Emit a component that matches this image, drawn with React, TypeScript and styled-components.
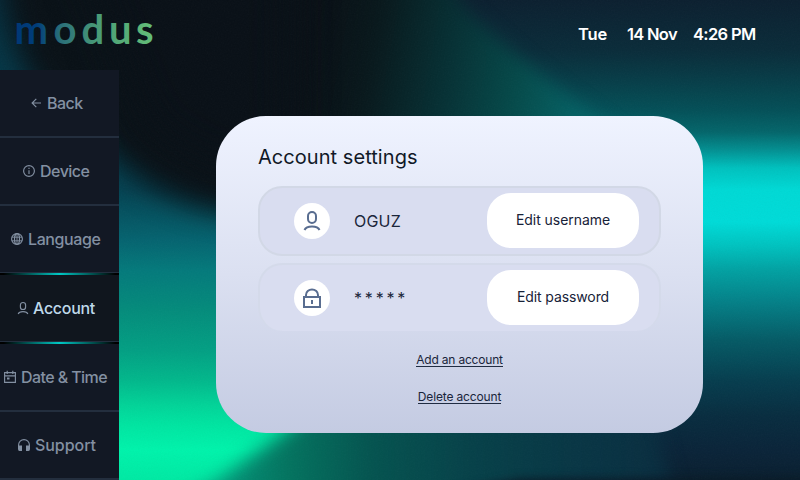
import React from "react";
import styled, { createGlobalStyle } from "styled-components";

const Global = createGlobalStyle`
  *, *::before, *::after { box-sizing: border-box; }
  body { margin: 0; overflow: hidden; background: #0a1119; font-family: Inter, "Open Sans", sans-serif; }
`;

const Screen = styled.div`
  position: relative;
  width: 800px;
  height: 480px;
  overflow: hidden;
  display: flex;
  flex-direction: column;
`;

const Backdrop = styled.svg`
  position: absolute;
  inset: 0;
  z-index: 0;
`;

const Header = styled.header`
  z-index: 1;
  height: 70px;
  flex: none;
  display: flex;
  justify-content: space-between;
`;

const Clock = styled.div`
  display: flex;
  width: 222px;
  padding-top: 24px;
  line-height: 20px;
`;

const ClockPart = styled.span<{ $w: number; $ls: number }>`
  width: ${(p) => p.$w}px;
  flex: none;
  white-space: nowrap;
  color: #fff;
  font-size: 16.5px;
  font-weight: 600;
  letter-spacing: ${(p) => p.$ls}px;
`;

const Body = styled.div`
  z-index: 1;
  display: flex;
  flex: 1;
`;

const Sidebar = styled.nav`
  width: 119px;
  height: 410px;
  flex: none;
  background: #121824;
`;

const NavItem = styled.a<{ $active?: boolean; $h: number; $pad: number; $line: number }>`
  display: flex;
  align-items: center;
  height: ${(p) => p.$h}px;
  padding-left: ${(p) => p.$pad}px;
  background: ${(p) => (p.$active ? "#10161e" : "#121824")};
  border-bottom: ${(p) => p.$line}px solid #232e3e;
  color: ${(p) => (p.$active ? "#bfd9ea" : "#8390a2")};
`;

const NavIcon = styled.svg<{ $gap: number }>`
  flex: none;
  width: 14px;
  height: 14px;
  margin-right: ${(p) => p.$gap}px;
  fill: none;
  stroke: #8390a2;
  stroke-width: 1.15;
`;

const NavLabel = styled.span<{ $ls: number }>`
  font-size: 16px;
  font-weight: 500;
  line-height: 20px;
  white-space: nowrap;
  letter-spacing: ${(p) => p.$ls}px;
`;

const Glow = styled.div`
  height: 2px;
  background: linear-gradient(90deg, #000 3%, #00c8c4 50%, #000 97%);
`;

const Card = styled.main`
  width: 487px;
  height: 317px;
  margin: 46px 0 0 97px;
  padding: 28px 42px 0;
  border-radius: 50px;
  background: linear-gradient(180deg, #eff3ff 0%, #dbe0f1 50%, #c4cbe2 100%);
  display: flex;
  flex-direction: column;
`;

const Title = styled.h1`
  margin: 0 0 16px;
  height: 26px;
  line-height: 26px;
  font-size: 20px;
  font-weight: 400;
  letter-spacing: 0.05px;
  color: #111927;
`;

const Row = styled.section<{ $last?: boolean }>`
  width: 403px;
  height: ${(p) => (p.$last ? 68 : 70)}px;
  margin-bottom: 7px;
  padding: 5px 20px 0 34px;
  border: 2px solid #d2d8e6;
  ${(p) => p.$last && "border-color: #d4daea; border-bottom-width: 0;"}
  border-radius: 24px;
  background: #d9ddf0;
  display: flex;
`;

const Avatar = styled.span`
  width: 36px;
  height: 36px;
  margin-top: 10px;
  border-radius: 50%;
  background: #fff;
  display: grid;
  place-items: center;
`;

const RowIcon = styled.svg`
  width: 24px;
  height: 24px;
  fill: none;
  stroke: #596d90;
  stroke-width: 2;
`;

const Value = styled.span<{ $ls: number }>`
  margin: 18px 0 0 24px;
  width: 133px;
  line-height: 20px;
  font-size: 16px;
  font-weight: 400;
  letter-spacing: ${(p) => p.$ls}px;
  color: #1b263b;
`;

const Button = styled.button<{ $ls: number }>`
  width: 152px;
  height: 55px;
  padding: 0 0 2px;
  border: 0;
  border-radius: 24px;
  background: #fff;
  color: #172238;
  font: 400 14px/20px Inter, sans-serif;
  letter-spacing: ${(p) => p.$ls}px;
`;

const Links = styled.div`
  display: flex;
  flex-direction: column;
  align-items: center;
  gap: 22px;
  margin-top: 14px;
`;

const Link = styled.a<{ $ls: number }>`
  height: 15px;
  line-height: 15px;
  font-size: 12px;
  font-weight: 400;
  letter-spacing: ${(p) => p.$ls}px;
  color: #1a253b;
  border-bottom: 1px solid #202c42;
`;

const Logo = () => (
  <svg width="170" height="70">
    <defs>
      <linearGradient id="brand" gradientUnits="userSpaceOnUse" x1="17" y1="0" x2="154" y2="0">
        <stop offset="0" stopColor="#003876" />
        <stop offset=".14" stopColor="#003d79" />
        <stop offset=".32" stopColor="#2b7079" />
        <stop offset=".62" stopColor="#4c9f77" />
        <stop offset="1" stopColor="#64be78" />
      </linearGradient>
    </defs>
    <text x="14.5 53.5 81.5 109 136" y="44" fontFamily="Lato" fontWeight="700" fontSize="40" fill="url(#brand)">
      modus
    </text>
  </svg>
);

const Stops = ({ list }: { list: [number, string][] }) => (
  <>
    {list.map(([at, color]) => (
      <stop key={at} offset={at / 480} stopColor={color} />
    ))}
  </>
);

const Aurora = () => (
  <Backdrop width="800" height="480" viewBox="0 0 800 480">
    <defs>
      {[5, 9, 14, 22].map((d) => (
        <filter key={d} id={`b${d}`} filterUnits="userSpaceOnUse" x="-200" y="-200" width="1200" height="900" colorInterpolationFilters="sRGB">
          <feGaussianBlur stdDeviation={d} />
        </filter>
      ))}
      <filter id="grain" x="0" y="0" width="100%" height="100%" colorInterpolationFilters="sRGB">
        <feTurbulence type="fractalNoise" baseFrequency=".7" numOctaves="2" seed="4" />
        <feColorMatrix type="saturate" values="0" />
      </filter>
      <linearGradient id="leftWash" x1="0" y1="0" x2="0" y2="480" gradientUnits="userSpaceOnUse">
        <Stops
          list={[
            [0, "#053040"],
            [190, "#054454"],
            [240, "#056470"],
            [270, "#047a7c"],
            [310, "#048c7c"],
            [350, "#03a084"],
            [380, "#02b88c"],
            [405, "#02d499"],
            [425, "#00e6a2"],
            [450, "#00f4ac"],
            [480, "#00eaa4"],
          ]}
        />
      </linearGradient>
      <linearGradient id="rightWash" x1="0" y1="0" x2="0" y2="480" gradientUnits="userSpaceOnUse">
        <Stops
          list={[
            [0, "#0c2030"],
            [50, "#0a2c3a"],
            [80, "#073d48"],
            [110, "#045058"],
            [132, "#04666b"],
            [150, "#039092"],
            [168, "#00c2bf"],
            [190, "#00dad6"],
            [222, "#00dcd9"],
            [245, "#00c4c1"],
            [270, "#02a2a3"],
            [300, "#04838a"],
            [340, "#055b66"],
            [380, "#063e4f"],
            [415, "#082d40"],
            [450, "#0a2439"],
            [480, "#0a1f30"],
          ]}
        />
      </linearGradient>
      <linearGradient id="bottomWash" x1="220" y1="0" x2="720" y2="0" gradientUnits="userSpaceOnUse">
        <stop offset="0" stopColor="#039478" />
        <stop offset=".14" stopColor="#03735f" />
        <stop offset=".3" stopColor="#045450" />
        <stop offset=".5" stopColor="#064149" />
        <stop offset=".75" stopColor="#083444" />
        <stop offset="1" stopColor="#0a283c" />
      </linearGradient>
      <linearGradient id="ridge" x1="310" y1="70" x2="580" y2="120" gradientUnits="userSpaceOnUse">
        <stop offset="0" stopColor="#091016" />
        <stop offset=".2" stopColor="#08171b" />
        <stop offset=".5" stopColor="#063135" />
        <stop offset=".75" stopColor="#054a4a" />
        <stop offset="1" stopColor="#056467" />
      </linearGradient>
    </defs>
    <rect width="800" height="480" fill="url(#rightWash)" />
    <rect x="-100" y="0" width="480" height="480" fill="url(#leftWash)" />
    <path d="M150 520 L215 482 L295 425 L350 360 L640 360 L700 600 Z" fill="url(#bottomWash)" filter="url(#b9)" />
    <path d="M250 -60 L425 -60 L465 10 L515 55 L565 95 L640 150 L400 180 L250 180 Z" fill="url(#ridge)" filter="url(#b9)" />
    <path d="M20 -60 L300 -60 L300 222 L235 214 Q160 202 115 158 L35 85 Q0 30 0 -60 Z" fill="#091117" filter="url(#b14)" />
    <path d="M80 -50 L290 -50 L290 170 L220 170 L150 130 Z" fill="#091017" filter="url(#b22)" />
    <path d="M400 500 L520 479 L900 477 L900 520 Z" fill="#081a27" filter="url(#b5)" />
    <rect width="800" height="480" filter="url(#grain)" opacity=".035" />
  </Backdrop>
);

const icons = {
  back: <path d="M12 7H3.5M7.3 2.8L3.1 7L7.3 11.2" />,
  info: (
    <>
      <circle cx="7" cy="7" r="5.4" />
      <path d="M7 6.2V10M7 3.8V5" />
    </>
  ),
  globe: (
    <>
      <circle cx="7" cy="7" r="5.4" />
      <ellipse cx="7" cy="7" rx="2.5" ry="5.4" />
      <path d="M1.8 5.2H12.2M1.8 8.8H12.2M7 1.6V12.4" strokeWidth=".9" />
    </>
  ),
  user: (
    <>
      <rect x="4.4" y="1.5" width="5.2" height="7" rx="2.6" />
      <path d="M2.2 13Q3 10.6 7 10.6T11.8 13" />
    </>
  ),
  calendar: (
    <>
      <path d="M1.6 2.6H12.4V12.4H1.6ZM1.6 5.8H12.4M4.2 .8V4M9.8 .8V4" />
      <path d="M4 8.5H6.5" strokeWidth="2" />
    </>
  ),
  phones: (
    <>
      <path d="M1.6 10V7A5.4 5.4 0 0 1 12.4 7V10" />
      <path d="M1 7.6H5V12.9H2.5Q1 12.9 1 11ZM13 7.6H9V12.9H11.5Q13 12.9 13 11Z" fill="#8390a2" stroke="none" />
    </>
  ),
};

type Item = { icon: keyof typeof icons; label: string; h: number; pad: number; gap: number; ls: number; line: number; active?: boolean };

const items: Item[] = [
  { icon: "back", label: "Back", h: 68, pad: 29, gap: 4, ls: -0.5, line: 2 },
  { icon: "info", label: "Device", h: 68, pad: 22, gap: 4, ls: -0.5, line: 2 },
  { icon: "globe", label: "Language", h: 67, pad: 10, gap: 4, ls: -0.4, line: 1 },
  { icon: "user", label: "Account", h: 67, pad: 16, gap: 3, ls: -0.3, line: 1, active: true },
  { icon: "calendar", label: "Date & Time", h: 68, pad: 3, gap: 4, ls: -0.58, line: 2 },
  { icon: "phones", label: "Support", h: 68, pad: 17, gap: 4, ls: -0.05, line: 2 },
];

export default function App() {
  return (
    <Screen>
      <Global />
      <Aurora />
      <Header>
        <Logo />
        <Clock>
          <ClockPart $w={49} $ls={-0.1}>Tue</ClockPart>
          <ClockPart $w={66} $ls={-0.7}>14 Nov</ClockPart>
          <ClockPart $w={80} $ls={-0.65}>4:26 PM</ClockPart>
        </Clock>
      </Header>
      <Body>
        <Sidebar>
          {items.map((it) => (
            <React.Fragment key={it.label}>
              {it.active && <Glow />}
              <NavItem $active={it.active} $h={it.h} $pad={it.pad} $line={it.line}>
                <NavIcon viewBox="0 0 14 14" $gap={it.gap}>{icons[it.icon]}</NavIcon>
                <NavLabel $ls={it.ls}>{it.label}</NavLabel>
              </NavItem>
              {it.active && <Glow />}
            </React.Fragment>
          ))}
        </Sidebar>
        <Card>
          <Title>Account settings</Title>
          <Row>
            <Avatar>
              <RowIcon viewBox="0 0 24 24">
                <rect x="8" y="3" width="8" height="11" rx="4" />
                <path d="M4.5 21Q6 17.5 12 17.5T19.5 21" />
              </RowIcon>
            </Avatar>
            <Value $ls={0.2}>OGUZ</Value>
            <Button $ls={-0.05}>Edit username</Button>
          </Row>
          <Row $last>
            <Avatar>
              <RowIcon viewBox="0 0 24 24">
                <path d="M4 11H20V21H4ZM6 11V9A6 5.5 0 0 1 18 9V11M12 14V18" />
              </RowIcon>
            </Avatar>
            <Value $ls={-0.85}>* * * * *</Value>
            <Button $ls={-0.1}>Edit password</Button>
          </Row>
          <Links>
            <Link $ls={-0.2}>Add an account</Link>
            <Link $ls={-0.15}>Delete account</Link>
          </Links>
        </Card>
      </Body>
    </Screen>
  );
}
